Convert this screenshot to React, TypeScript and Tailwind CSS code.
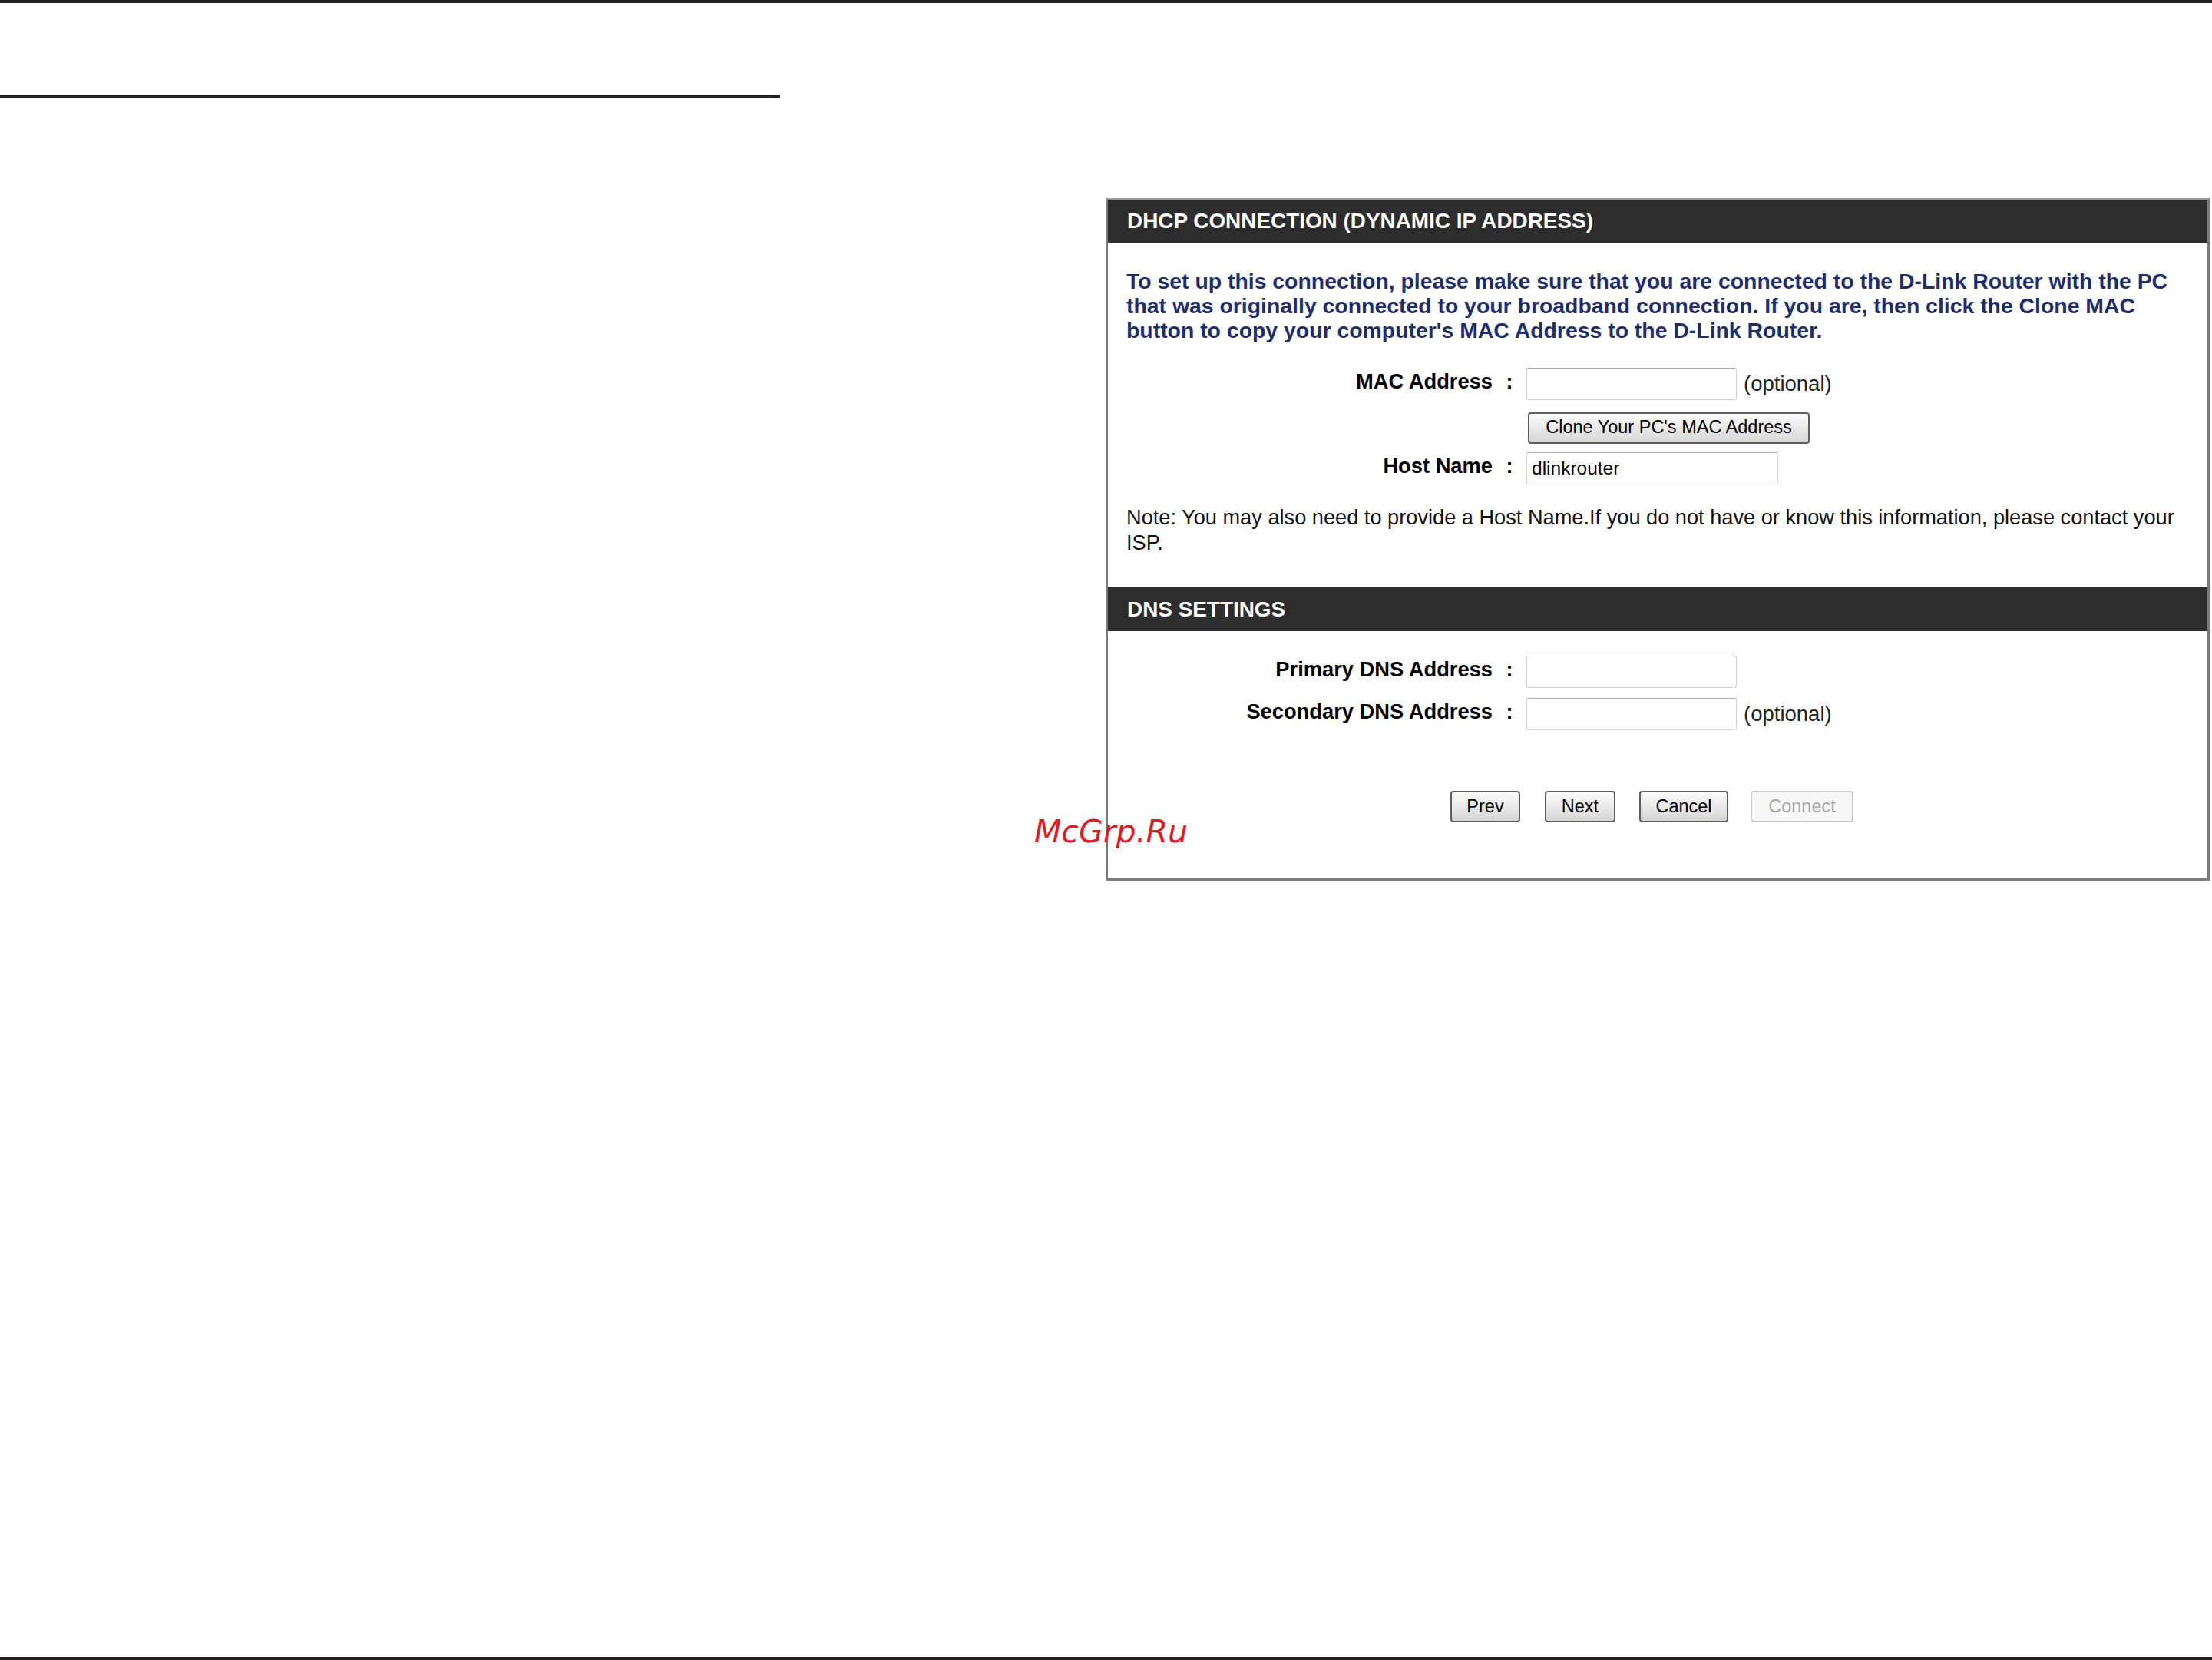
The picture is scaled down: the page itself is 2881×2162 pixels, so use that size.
import React from 'react';

const ui = "font-['Liberation_Sans',Arial,sans-serif]";

interface FieldRowProps {
  label?: string;
  children: React.ReactNode;
  className?: string;
}

const FieldRow: React.FC<FieldRowProps> = ({ label, children, className }) => {
  return (
    <div className={`flex h-[42px] items-center ${className ?? ''}`}>
      <div className="w-[501px] pb-[6px] text-right text-[27.3px] font-bold leading-[36px] text-black whitespace-nowrap">
        {label}
      </div>
      <div className="w-[44px] pb-[6px] text-center text-[27.3px] font-bold leading-[36px] text-black">
        {label ? ':' : ''}
      </div>
      {children}
    </div>
  );
};

const TextBox: React.FC<{ width: string; value?: string }> = ({ width, value }) => (
  <input
    type="text"
    readOnly
    defaultValue={value ?? ''}
    className={`${width} h-[42px] rounded-[3px] border border-[#d0d0d0] border-t-[#a8a8a8] bg-white px-[6px] text-[24.5px] text-black outline-none ${ui}`}
  />
);

const Optional = () => <span className="ml-[9px] text-[27.5px] text-[#222]">(optional)</span>;

const SectionHeader: React.FC<{ title: string; height: string }> = ({ title, height }) => (
  <div className={`${height} flex items-center bg-[#2d2d2d] pl-[25px] text-[27.9px] font-bold text-white`}>{title}</div>
);

const WizardButton: React.FC<{ label: string; width: string; disabled?: boolean; className?: string }> = ({
  label,
  width,
  disabled,
  className,
}) => (
  <button
    type="button"
    disabled={disabled}
    className={`${width} h-[41px] rounded-[4px] border-2 text-[23.5px] ${ui} ${
      disabled
        ? 'border-[#c8c8c8] bg-[#f7f7f7] text-[#a8a8a8]'
        : 'border-[#5e5e5e] bg-gradient-to-b from-[#fbfbfb] to-[#d6d6d6] text-black'
    } ${className ?? ''}`}
  >
    {label}
  </button>
);

export default function App() {
  return (
    <div className={`relative h-[2162px] w-[2881px] overflow-hidden border-t-4 border-b-4 border-[#231f20] bg-white ${ui}`}>
      <div className="mt-[120px] h-[3px] w-[1016px] bg-[#231f20]" />

      <div className="ml-[1441px] mt-[131px] w-[1437px] border-2 border-r-[3px] border-b-[3px] border-[#7a7a7a] border-t-[#9a9a9a] bg-white">
        <SectionHeader title="DHCP CONNECTION (DYNAMIC IP ADDRESS)" height="h-[56px]" />

        <p className="mt-[34px] px-[24px] text-[28.4px] font-bold leading-[32px] text-[#1e2d6b] whitespace-nowrap">
          To set up this connection, please make sure that you are connected to the D-Link Router with the PC
          <br />
          that was originally connected to your broadband connection. If you are, then click the Clone MAC
          <br />
          button to copy your computer's MAC Address to the D-Link Router.
        </p>

        <FieldRow label="MAC Address" className="mt-[33px]">
          <TextBox width="w-[274px]" />
          <Optional />
        </FieldRow>

        <FieldRow className="mt-[15px]">
          <button
            type="button"
            className={`ml-[2px] h-[41px] w-[367px] rounded-[4px] border-2 border-[#5e5e5e] bg-gradient-to-b from-[#fbfbfb] to-[#d6d6d6] text-[23.5px] text-black ${ui}`}
          >
            Clone Your PC's MAC Address
          </button>
        </FieldRow>

        <FieldRow label="Host Name" className="mt-[11px]">
          <TextBox width="w-[328px]" value="dlinkrouter" />
        </FieldRow>

        <p className="mt-[26px] px-[24px] text-[27.2px] leading-[33px] text-[#111]">
          Note: You may also need to provide a Host Name.If you do not have or know this information, please contact your
          ISP.
        </p>

        <div className="mt-[41px] border-t border-[#9a9a9a]">
          <SectionHeader title="DNS SETTINGS" height="h-[57px]" />
        </div>

        <FieldRow label="Primary DNS Address" className="mt-[32px]">
          <TextBox width="w-[274px]" />
        </FieldRow>

        <FieldRow label="Secondary DNS Address" className="mt-[13px]">
          <TextBox width="w-[274px]" />
          <Optional />
        </FieldRow>

        <div className="mt-[79px] mb-[73px] flex pl-[446px]">
          <WizardButton label="Prev" width="w-[91px]" />
          <WizardButton label="Next" width="w-[92px]" className="ml-[32px]" />
          <WizardButton label="Cancel" width="w-[116px]" className="ml-[31px]" />
          <WizardButton label="Connect" width="w-[134px]" className="ml-[29px]" disabled />
        </div>
      </div>

      {/* watermark sits over the panel edge */}
      <div className="absolute left-[1347px] top-[1059px] font-['DejaVu_Sans',sans-serif] text-[41px] italic leading-[41px] text-[#d91e26]">
        McGrp.Ru
      </div>
    </div>
  );
}
